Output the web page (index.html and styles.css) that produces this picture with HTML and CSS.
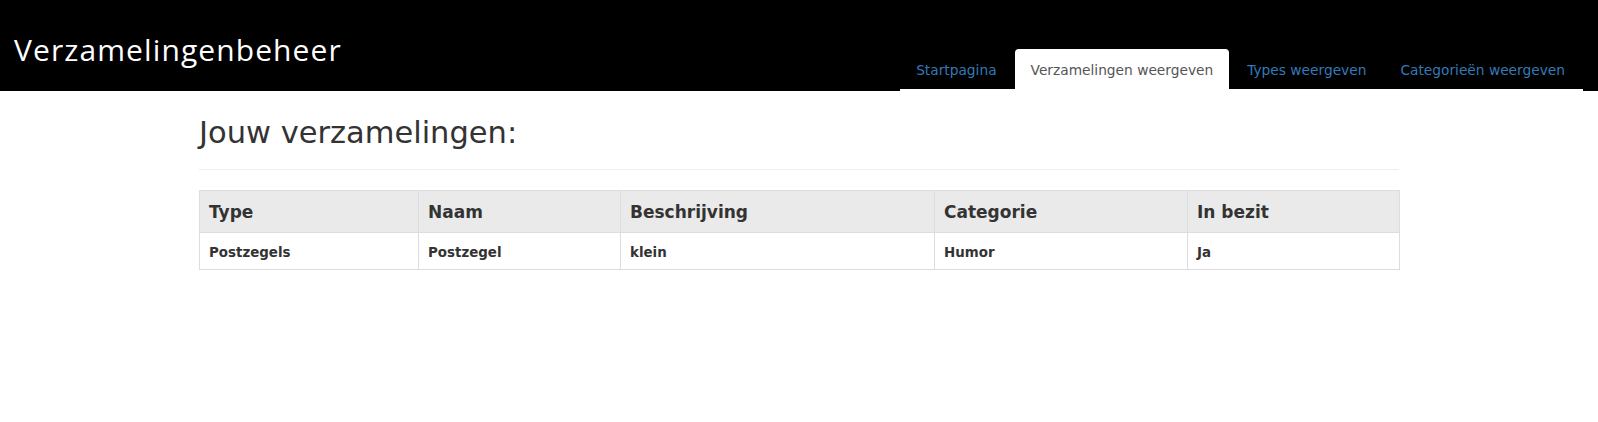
FILE: index.html
```html
<!DOCTYPE html>
<html lang="nl">
<head>
<meta charset="utf-8">
<title>Verzamelingenbeheer</title>
<link rel="stylesheet" href="styles.css">
</head>
<body>
<header class="site-header">
  <div class="brand">Verzamelingenbeheer</div>
  <nav class="tabs">
    <a class="tab" href="#">Startpagina</a>
    <a class="tab active" href="#">Verzamelingen weergeven</a>
    <a class="tab" href="#">Types weergeven</a>
    <a class="tab" href="#">Categorieën weergeven</a>
  </nav>
</header>
<main class="container">
  <div class="page-header">
    <h2 class="title">Jouw verzamelingen:</h2>
  </div>
  <table class="grid">
    <colgroup>
      <col class="c1"><col class="c2"><col class="c3"><col class="c4"><col class="c5">
    </colgroup>
    <thead>
      <tr><th>Type</th><th>Naam</th><th>Beschrijving</th><th>Categorie</th><th>In bezit</th></tr>
    </thead>
    <tbody>
      <tr><td>Postzegels</td><td>Postzegel</td><td>klein</td><td>Humor</td><td>Ja</td></tr>
    </tbody>
  </table>
</main>
</body>
</html>
```
FILE: styles.css
```css
html, body {
  margin: 0;
  padding: 0;
  background: #fff;
  font-family: "DejaVu Sans", Verdana, sans-serif;
  color: #333;
}

.site-header {
  height: 91px;
  background: #000;
  display: flex;
  justify-content: space-between;
  align-items: flex-start;
  box-sizing: border-box;
}

.brand {
  font-family: "Open Sans", "Noto Sans", sans-serif;
  font-size: 30px;
  letter-spacing: 1.1px;
  line-height: 40px;
  color: #fff;
  padding: 30px 0 0 14px;
}

.tabs {
  align-self: flex-end;
  display: flex;
  margin-right: 15px;
  border-bottom: 2px solid #fff;
}

.tab {
  display: block;
  font-size: 13.75px;
  line-height: 20px;
  padding: 10px 15px 9px;
  margin-right: 2px;
  border: 1px solid transparent;
  border-bottom: 0;
  border-radius: 4px 4px 0 0;
  color: #337ab7;
  text-decoration: none;
}

.tab.active {
  background: #fff;
  border-color: #fff;
  color: #555;
}

.container {
  width: 1200px;
  margin: 0 auto;
  padding-top: 26px;
}

.page-header {
  padding-bottom: 20px;
  border-bottom: 1px solid #eee;
  margin-bottom: 20px;
}

.title {
  margin: 0;
  font-size: 30.5px;
  font-weight: normal;
  line-height: 32px;
  color: #333;
}

.grid {
  width: 100%;
  border-collapse: collapse;
  table-layout: fixed;
}

.c1 { width: 219px; }
.c2 { width: 202px; }
.c3 { width: 314px; }
.c4 { width: 253px; }
.c5 { width: 212px; }

.grid th,
.grid td {
  border: 1px solid #ddd;
  text-align: left;
  font-weight: bold;
  color: #333;
}

.grid th {
  background: #eaeaea;
  font-size: 17px;
  line-height: 24px;
  padding: 9px 9px 8px;
}

.grid td {
  font-size: 13.4px;
  line-height: 20px;
  padding: 10px 9px 6px;
}
```
